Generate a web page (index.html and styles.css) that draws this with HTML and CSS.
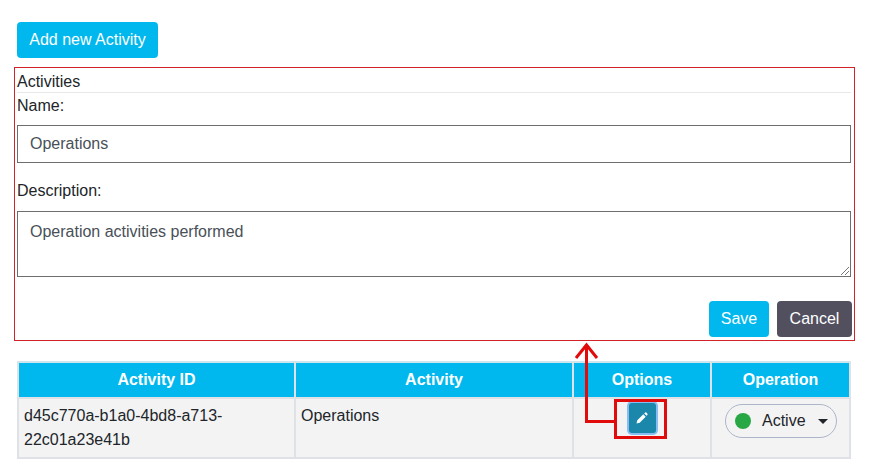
FILE: index.html
```html
<!DOCTYPE html>
<html lang="en">
<head>
    <meta charset="UTF-8">
    <meta name="viewport" content="width=device-width, initial-scale=1.0">
    <link rel="stylesheet" href="styles.css">
    <title>Activities</title>
</head>
<body>
  <div class="page">
    <button class="btn btn-add">Add new Activity</button>

    <div class="activity-form">
      <div class="form-title">Activities</div>
      <div class="form-label name-label">Name:</div>
      <div class="field field-name">Operations</div>
      <div class="form-label desc-label">Description:</div>
      <div class="field field-desc">
        Operation activities performed
        <svg class="resize-grip" width="9" height="9" viewBox="0 0 9 9">
          <path d="M1 9 L9 1 M5 9 L9 5" stroke="#777" stroke-width="1" fill="none"/>
        </svg>
      </div>
      <div class="form-actions">
        <button class="btn btn-save">Save</button>
        <button class="btn btn-cancel">Cancel</button>
      </div>
    </div>

    <table class="activity-table">
      <thead>
        <tr>
          <th class="col-id">Activity ID</th>
          <th class="col-name">Activity</th>
          <th class="col-options">Options</th>
          <th class="col-op">Operation</th>
        </tr>
      </thead>
      <tbody>
        <tr>
          <td>d45c770a-b1a0-4bd8-a713-22c01a23e41b</td>
          <td>Operations</td>
          <td class="cell-options">
            <span class="edit-btn">
              <svg width="12" height="12" viewBox="0 0 12 12">
                <path d="M0.500 11.500 L1.300 8.300 L7.300 2.300 L9.700 4.700 L3.700 10.700 Z M8.200 1.400 L9.100 0.600 Q9.700 0.100 10.300 0.600 L11.400 1.700 Q11.900 2.300 11.400 2.900 L10.600 3.800 Z" fill="#fff"/>
              </svg>
            </span>
          </td>
          <td class="cell-op">
            <span class="status-pill">
              <span class="status-dot"></span>
              <span class="status-text">Active</span>
              <span class="caret"></span>
            </span>
          </td>
        </tr>
      </tbody>
    </table>
  </div>

  <!-- red callout drawn over the page -->
  <svg class="callout" width="874" height="460" viewBox="0 0 874 460">
    <rect x="615.5" y="400.5" width="50" height="37" fill="none" stroke="#e20b0b" stroke-width="3"/>
    <path d="M615 421.500 H586.500 V347" fill="none" stroke="#e20b0b" stroke-width="3"/>
    <path d="M576 358 L586.500 345 L597 358" fill="none" stroke="#e20b0b" stroke-width="3"/>
  </svg>
</body>
</html>
```

FILE: styles.css
```css
html, body {
  margin: 0;
  padding: 0;
  height: 460px;
  overflow: hidden;
}

body {
  font-family: "Liberation Sans", Arial, sans-serif;
  font-size: 16px;
  color: #212529;
  background-color: #fff;
  position: relative;
}

.page {
  padding: 22px 19px 0 14px;
}

.btn {
  font-family: inherit;
  font-size: 16px;
  line-height: 24px;
  color: #fff;
  border: none;
  border-radius: 4px;
  padding: 6px 12px;
  cursor: pointer;
}

.btn-add {
  display: block;
  margin-left: 3px;
  width: 141px;
  padding: 6px 0;
  background-color: #00b8ee;
}

.activity-form {
  margin-top: 9px;
  height: 272px;
  border: 1px solid #d2232a;
  padding: 0 3px 0 2px;
  display: flex;
  flex-direction: column;
}

.form-title {
  line-height: 28px;
  height: 24px;
  flex: none;
  border-bottom: 1px solid #e8e8e8;
}

.form-label {
  line-height: 26px;
  height: 24px;
  flex: none;
}

.name-label {
  margin-bottom: 8px;
}

.desc-label {
  margin-top: 15px;
  margin-bottom: 9px;
}

.field {
  box-sizing: border-box;
  border: 1px solid #6e6e6e;
  color: #495057;
  padding: 6px 12px;
  line-height: 24px;
  position: relative;
  flex: none;
}

.field-name {
  height: 38px;
}

.field-desc {
  height: 66px;
  padding-top: 8px;
}

.resize-grip {
  position: absolute;
  right: 1px;
  bottom: 1px;
}

.form-actions {
  display: flex;
  justify-content: flex-end;
  gap: 8px;
  margin-top: 24px;
  margin-right: -1px;
}

.btn-save {
  width: 60px;
  padding: 6px 0;
  background-color: #00b8ee;
}

.btn-cancel {
  width: 75px;
  padding: 6px 0;
  background-color: #52505f;
}

.activity-table {
  margin: 20px 0 0 3px;
  width: 834px;
  border-collapse: collapse;
  table-layout: fixed;
  border: 2px solid #dee2e6;
}

.activity-table th,
.activity-table td {
  box-sizing: border-box;
}

.col-id { width: 277px; }
.col-name { width: 278px; }
.col-options { width: 138px; }

.activity-table th {
  background-color: #00b8ee;
  color: #fff;
  font-weight: bold;
  height: 36px;
  padding: 0 6px;
  border: 2px solid #dee2e6;
  border-top-color: #cfe6ee;
}

.activity-table td {
  background-color: #f3f3f4;
  border: 2px solid #dee2e6;
  padding: 5px 5px 3px;
  line-height: 24px;
  height: 60px;
  vertical-align: top;
}

.activity-table td.cell-options {
  text-align: center;
  padding: 0;
}

.edit-btn {
  display: inline-flex;
  align-items: center;
  justify-content: center;
  width: 27px;
  height: 30px;
  margin-top: 4px;
  background-color: #1a87ab;
  box-shadow: 0 0 0 2px #87bdf3;
  border-radius: 3px;
}

.activity-table td.cell-op {
  padding: 5px 12px 0 13px;
}

.status-pill {
  display: flex;
  align-items: center;
  box-sizing: border-box;
  height: 34px;
  border: 1px solid #adb5c8;
  border-radius: 17px;
  padding: 0 8px 0 9px;
}

.status-dot {
  width: 16px;
  height: 16px;
  border-radius: 50%;
  background-color: #28a745;
  margin-right: 11px;
}

.status-text {
  flex: 1;
}

.caret {
  width: 0;
  height: 0;
  border-top: 5px solid #212529;
  border-left: 5px solid transparent;
  border-right: 5px solid transparent;
}

.callout {
  position: absolute;
  top: 0;
  left: 0;
  pointer-events: none;
}
```
